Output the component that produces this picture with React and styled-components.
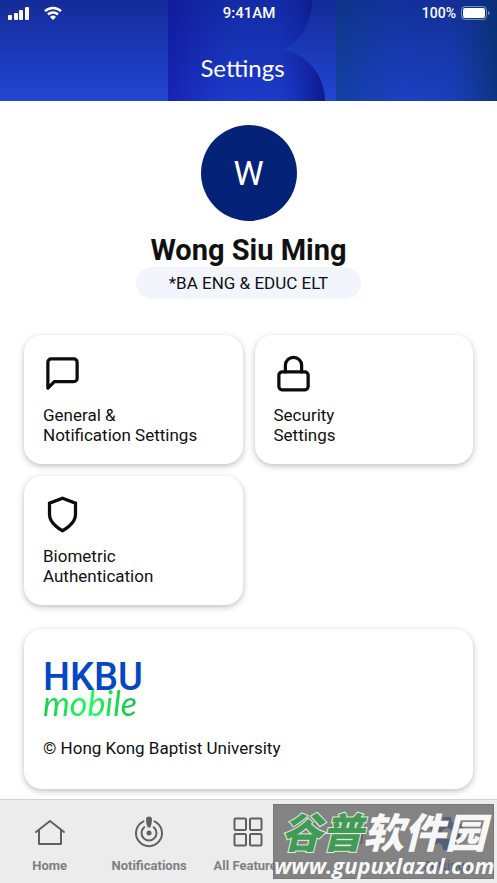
import React from 'react';
import styled, { createGlobalStyle } from 'styled-components';


// ============================================
// STYLED COMPONENTS
// ===========================================

const GlobalStyle = createGlobalStyle`
  * {
    box-sizing: border-box;
  }

  body {
    margin: 0;
    background: white;
    color: #111111;
    font-family: Roboto, 'Liberation Sans', sans-serif;
  }
`;

const Page = styled.div`
  display: flex;
  flex-direction: column;
  min-height: 100vh;
`;

const Header = styled.header`
  position: relative;
  color: white;
  padding-bottom: 16px;
  overflow: hidden;
`;

const HeaderArt = styled.svg`
  position: absolute;
  top: 0;
  left: 0;
  width: 100%;
  height: 100%;
  z-index: -1;
`;

const StatusBar = styled.div`
  display: grid;
  grid-template-columns: 1fr auto 1fr;
  align-items: center;
  height: 26px;
  padding: 0 7px 0 8px;
  font-size: 14px;
  font-weight: 500;
`;

const StatusGroup = styled.div`
  display: flex;
  align-items: center;
  justify-content: ${props => props.$end ? 'flex-end' : 'flex-start'};
  gap: ${props => props.$end ? '4px' : '14px'};
`;

const Clock = styled.span`
  font-size: 15px;
`;

const Title = styled.h1`
  margin: 0;
  padding: 25px 12px 0 0;
  font-family: Lato, 'Liberation Sans', sans-serif;
  font-size: 24px;
  font-weight: 400;
  line-height: 34px;
  text-align: center;
`;

const Main = styled.main`
  flex: 1;
  display: flex;
  flex-direction: column;
  padding: 24px 24px 10px;
`;

const Profile = styled.section`
  display: flex;
  flex-direction: column;
  align-items: center;
  margin-bottom: 36px;
`;

const Avatar = styled.div`
  display: flex;
  align-items: center;
  justify-content: center;
  width: 96px;
  height: 96px;
  border-radius: 50%;
  background: #042378;
  color: white;
  font-size: 34px;
`;

const Name = styled.h2`
  margin: 12px 0 0;
  font-size: 29px;
  font-weight: 700;
  line-height: 34px;
`;

const Programme = styled.p`
  margin: 0;
  padding: 0 33px;
  border-radius: 16px;
  background: #f2f5fb;
  font-size: 17px;
  line-height: 32px;
`;

const Cards = styled.div`
  display: grid;
  grid-template-columns: 1fr 1fr;
  gap: 12px;
  margin-bottom: 24px;
`;

const Card = styled.button`
  display: flex;
  flex-direction: column;
  align-items: flex-start;
  gap: 12px;
  padding: 19px;
  border: none;
  border-radius: 18px;
  background: white;
  box-shadow: 0 2px 6px rgba(0, 0, 0, 0.26);
  color: inherit;
  font: inherit;
  font-size: 17px;
  line-height: 20px;
  text-align: left;
  white-space: pre-line;
  cursor: pointer;
`;

const CardIcon = styled.svg`
  display: block;
  width: 39px;
  height: 39px;
  fill: none;
  stroke: #0c0c0c;
  stroke-width: 2;
  stroke-linecap: round;
`;

const About = styled.section`
  padding: 29px 19px 31px;
  border-radius: 18px;
  background: white;
  box-shadow: 0 2px 6px rgba(0, 0, 0, 0.26);
`;

const Logo = styled.div`
  display: flex;
  flex-direction: column;
  align-items: flex-start;
  isolation: isolate;
`;

const LogoMain = styled.span`
  color: #0447c4;
  font-size: 38px;
  font-weight: 500;
  line-height: 38px;
`;

const LogoSub = styled.span`
  position: relative;
  z-index: -1;
  margin-top: -12px;
  background: linear-gradient(90deg, #16cf45, #1cff5a 50%, #17bd43);
  background-clip: text;
  color: transparent;
  font-family: Lato, sans-serif;
  font-size: 34px;
  font-style: italic;
  line-height: 38px;
`;

const Copyright = styled.p`
  margin: 16px 0 0;
  font-size: 17px;
  line-height: 20px;
`;

const TabBar = styled.nav`
  position: sticky;
  bottom: 0;
  display: grid;
  grid-template-columns: repeat(5, minmax(0, 1fr));
  padding: 13px 0 8px;
  border-top: 1px solid #d2d2d2;
  background: #ececec;
`;

const Tab = styled.a`
  display: flex;
  flex-direction: column;
  align-items: center;
  gap: 7px;
  min-height: 62px;
  color: ${props => props.$active ? '#1646b8' : '#808080'};
  font-size: 13px;
  font-weight: 700;
  line-height: 16px;
  text-decoration: none;
  white-space: nowrap;
`;

const Watermark = styled.div`
  position: absolute;
  right: 3px;
  bottom: 4px;
  width: 221px;
  height: 75px;
  border: 1px solid #777777;
  background: rgba(105, 105, 105, 0.8);
  color: rgba(255, 255, 255, 0.95);
  font-style: italic;
  text-align: center;
  white-space: nowrap;
`;

const MarkName = styled.div`
  font-family: 'Noto Sans CJK SC', sans-serif;
  font-size: 41px;
  font-weight: 900;
  line-height: 50px;
`;

const MarkGreen = styled.span`
  color: #429b54;
  paint-order: stroke fill;
  -webkit-text-stroke: 2px #e4ece4;
`;

const MarkUrl = styled.div`
  font-family: 'Open Sans', sans-serif;
  font-size: 22px;
  font-weight: 700;
  line-height: 20px;
`;

// ============================================
// ICONS
// ===========================================

const MessageIcon = () => (
  <CardIcon viewBox="0 0 24 24">
    <path strokeLinejoin="round" d="M21 15a2 2 0 0 1-2 2H7l-4 4V5a2 2 0 0 1 2-2h14a2 2 0 0 1 2 2z" />
  </CardIcon>
);

const LockIcon = () => (
  <CardIcon viewBox="0 0 24 24">
    <rect x="3" y="11" width="18" height="11" rx="2" />
    <path d="M7 11V7a5 5 0 0 1 10 0v4" />
  </CardIcon>
);

const ShieldIcon = () => (
  <CardIcon viewBox="0 0 24 24">
    <path d="M12 22s8-4 8-10V5l-8-3-8 3v7c0 6 8 10 8 10z" />
  </CardIcon>
);

const SignalIcon = () => (
  <svg width="22" height="14" viewBox="0 0 22 14" fill="white">
    <rect x="0" y="9" width="4" height="5" rx="1" />
    <rect x="6" y="7" width="4" height="7" rx="1" />
    <rect x="11" y="4" width="4" height="10" rx="1" />
    <rect x="17" y="1" width="4" height="13" rx="1" />
  </svg>
);

const WifiIcon = () => (
  <svg width="18" height="14" viewBox="0 0 18 14" fill="none" stroke="white" strokeWidth="2.5">
    <path d="M1 5.2a11.4 11.4 0 0 1 16 0" />
    <path d="M4 8.5a7.2 7.2 0 0 1 10 0" />
    <path d="M9 14 6 11a4.3 4.3 0 0 1 6 0Z" fill="white" stroke="none" />
  </svg>
);

const BatteryIcon = () => (
  <svg width="30" height="14" viewBox="0 0 30 14">
    <rect x="1.5" y="0.5" width="25" height="13" rx="3.5" fill="none" stroke="white" strokeOpacity="0.45" />
    <rect x="3" y="2" width="22" height="10" rx="2" fill="white" />
    <path d="M28 5v4q1.5-.6 1.5-2T28 5Z" fill="white" fillOpacity="0.5" />
  </svg>
);

const HomeIcon = () => (
  <svg width="38" height="38" viewBox="0 0 38 38" fill="none" stroke="#606060" strokeWidth="2" strokeLinecap="round" strokeLinejoin="round">
    <path d="M5 19 19 8l14 11M8 17v14h22V17" />
  </svg>
);

const NotificationsIcon = () => (
  <svg width="38" height="38" viewBox="0 0 38 38" fill="none" stroke="#606060" strokeWidth="2" strokeLinecap="round">
    <path d="M13.5 8.4A13 13 0 1 0 24.5 8.4" />
    <path d="M14.2 14.2a7.5 7.5 0 1 0 9.6 0" />
    <circle cx="19" cy="20" r="2.5" fill="#606060" stroke="none" />
    <path d="M16 6.5a3 3 0 0 1 6 0q0 4-1.7 8h-2.6Q16 10.5 16 6.5Z" fill="#606060" stroke="none" />
  </svg>
);

const FeaturesIcon = () => (
  <svg width="38" height="38" viewBox="0 0 38 38" fill="none" stroke="#606060" strokeWidth="2">
    <rect x="5.5" y="5.5" width="11.5" height="11.5" rx="1" />
    <rect x="21" y="5.5" width="11.5" height="11.5" rx="1" />
    <rect x="5.5" y="21" width="11.5" height="11.5" rx="1" />
    <rect x="21" y="21" width="11.5" height="11.5" rx="1" />
  </svg>
);

const PassIcon = () => (
  <svg width="38" height="38" viewBox="0 0 38 38" fill="none" stroke="#606060" strokeWidth="2">
    <rect x="5" y="9" width="28" height="21" rx="2" />
    <path d="M18 24h10" />
  </svg>
);

const GearIcon = () => (
  <svg width="38" height="38" viewBox="0 0 38 38" fill="#0b37b4">
    <path fillRule="evenodd" d="M15 4h8l1 5 3 2 5-2 4 7-4 3v3l4 3-4 7-5-2-3 2-1 5h-8l-1-5-3-2-5 2-4-7 4-3v-3l-4-3 4-7 5 2 3-2ZM19 15a5.5 5.5 0 1 0 0 11 5.5 5.5 0 0 0 0-11Z" />
  </svg>
);

const HeaderBackground = () => (
  <HeaderArt viewBox="0 0 497 101" preserveAspectRatio="none" aria-hidden="true">
    <defs>
      <linearGradient id="base" x1="0" y1="0" x2="0" y2="1">
        <stop offset="0" stopColor="#142c98" />
        <stop offset="1" stopColor="#2245d4" />
      </linearGradient>
      <linearGradient id="letter" x1="0" y1="0" x2="1" y2="0">
        <stop offset="0" stopColor="#0e0e9c" stopOpacity="0.6" />
        <stop offset="0.4" stopColor="#1228b8" stopOpacity="0.35" />
        <stop offset="0.7" stopColor="#1228b8" stopOpacity="0.35" />
        <stop offset="1" stopColor="#08107a" stopOpacity="0.8" />
      </linearGradient>
      <linearGradient id="side" x1="0" y1="0" x2="1" y2="0">
        <stop offset="0" stopColor="#083d78" stopOpacity="0.55" />
        <stop offset="0.4" stopColor="#1038a0" stopOpacity="0.35" />
        <stop offset="0.7" stopColor="#103698" stopOpacity="0.4" />
        <stop offset="1" stopColor="#063068" stopOpacity="0.8" />
      </linearGradient>
    </defs>
    <rect width="497" height="101" fill="url(#base)" />
    <path d="M168 0H312C312 24 300 41 283 49C310 56 325 77 325 101H168Z" fill="url(#letter)" />
    <rect x="336" width="161" height="101" fill="url(#side)" />
  </HeaderArt>
);

// ============================================
// REACT
// ===========================================

const settings = [
  { label: 'General &\nNotification Settings', Icon: MessageIcon },
  { label: 'Security\nSettings', Icon: LockIcon },
  { label: 'Biometric\nAuthentication', Icon: ShieldIcon }
];

const tabs = [
  { id: 'home', label: 'Home', Icon: HomeIcon },
  { id: 'notifications', label: 'Notifications', Icon: NotificationsIcon },
  { id: 'features', label: 'All Features', Icon: FeaturesIcon },
  { id: 'pass', label: '', Icon: PassIcon },
  { id: 'settings', label: 'Settings', Icon: GearIcon }
];

class App extends React.Component {
  constructor(props) {
    super(props);

    this.state = {
      selectedTab: 'settings'
    };
  }

  handleTabClick(id) {
    this.setState({selectedTab: id});
  }

  render() {
    return (
      <Page>
        <GlobalStyle />
        <Header>
          <HeaderBackground />
          <StatusBar>
            <StatusGroup><SignalIcon /><WifiIcon /></StatusGroup>
            <Clock>9:41AM</Clock>
            <StatusGroup $end>100%<BatteryIcon /></StatusGroup>
          </StatusBar>
          <Title>Settings</Title>
        </Header>
        <Main>
          <Profile>
            <Avatar>W</Avatar>
            <Name>Wong Siu Ming</Name>
            <Programme>*BA ENG &amp; EDUC ELT</Programme>
          </Profile>
          <Cards>
            {settings.map(({label, Icon}) => (
              <Card key={label} type='button'>
                <Icon />
                {label}
              </Card>
            ))}
          </Cards>
          <About>
            <Logo>
              <LogoMain>HKBU</LogoMain>
              <LogoSub>mobile</LogoSub>
            </Logo>
            <Copyright>© Hong Kong Baptist University</Copyright>
          </About>
        </Main>
        <TabBar>
          {tabs.map(({id, label, Icon}) => (
            <Tab key={id} href={`#${id}`} aria-label={label || id} $active={this.state.selectedTab === id} onClick={() => this.handleTabClick(id)}>
              <Icon />
              {label}
            </Tab>
          ))}
          <Watermark>
            <MarkName><MarkGreen>谷普</MarkGreen>软件园</MarkName>
            <MarkUrl>www.gupuxlazal.com</MarkUrl>
          </Watermark>
        </TabBar>
      </Page>
    );
  }
}

export default App;
